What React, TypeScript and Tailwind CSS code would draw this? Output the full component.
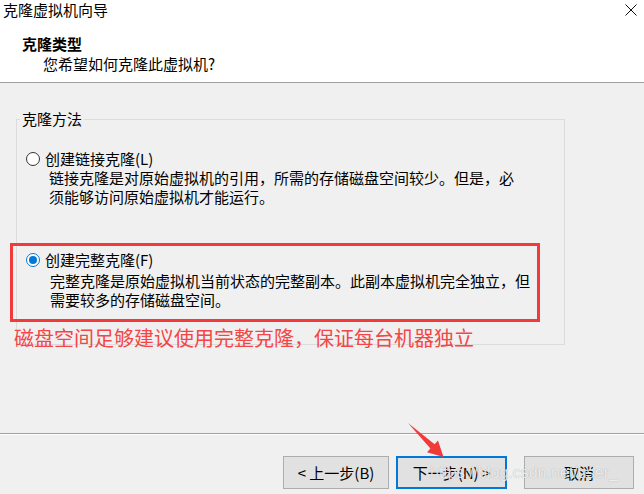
export default function App() {
  return (
    <div className="relative w-[644px] h-[494px] overflow-hidden bg-[#f0f0f0] font-['Noto_Sans_CJK_SC','Microsoft_YaHei',sans-serif] text-[15px] text-black">
      {/* header */}
      <div className="h-[83px] bg-white border-b border-[#a0a0a0]">
        <div className="flex h-[20px] items-center justify-between pl-[3px] pr-[7px]">
          <span className="leading-[20px]">克隆虚拟机向导</span>
          <svg width="12" height="12" viewBox="0 0 12 12">
            <path d="M0.5 0.5L11.5 11.5M11.5 0.5L0.5 11.5" stroke="#111" strokeWidth="1" fill="none" />
          </svg>
        </div>
        <div className="mt-[14px] pl-[22px] font-bold leading-[20px]">克隆类型</div>
        <div className="pl-[43px] leading-[20px]">您希望如何克隆此虚拟机?</div>
      </div>

      {/* group box */}
      <fieldset className="mt-[26px] ml-[16px] w-[549px] h-[236px] border border-[#dcdcdc]">
        <legend className="ml-[3px] px-[2px] leading-[20px]">克隆方法</legend>

        <div className="mt-[20px] flex h-[19px] items-center">
          <span className="ml-[9px] h-[14px] w-[14px] rounded-full border border-[#333] bg-white" />
          <span className="ml-[5px] leading-[19px]">创建链接克隆(L)</span>
        </div>
        <div className="ml-[32px] whitespace-nowrap leading-[19px]">
          链接克隆是对原始虚拟机的引用，所需的存储磁盘空间较少。但是，必
          <br />
          须能够访问原始虚拟机才能运行。
        </div>

        <div className="mt-[44px] flex h-[19px] items-center">
          <span className="ml-[9px] flex h-[14px] w-[14px] items-center justify-center rounded-full border border-[#0078d7] bg-white">
            <span className="h-[8px] w-[8px] rounded-full bg-[#0078d7]" />
          </span>
          <span className="ml-[5px] leading-[19px]">创建完整克隆(F)</span>
        </div>
        <div className="mt-[2px] ml-[33px] whitespace-nowrap leading-[19px]">
          完整克隆是原始虚拟机当前状态的完整副本。此副本虚拟机完全独立，但
          <br />
          需要较多的存储磁盘空间。
        </div>
      </fieldset>

      {/* separator */}
      <div className="mt-[88px] h-px bg-[#a0a0a0]" />
      <div className="h-px bg-white" />

      {/* buttons */}
      <div className="mt-[21px] flex justify-end pr-[10px]">
        <button className="h-[33px] w-[106px] border border-[#adadad] bg-[#e1e1e1] leading-[20px]">&lt; 上一步(B)</button>
        <button className="ml-[7px] h-[33px] w-[111px] border-2 border-[#0078d7] bg-[#e1e1e1] leading-[20px]">下一步(N) &gt;</button>
        <button className="ml-[17px] h-[33px] w-[110px] border border-[#adadad] bg-[#e1e1e1] leading-[20px]">取消</button>
      </div>

      {/* annotations */}
      <div className="absolute left-[10px] top-[243px] h-[79px] w-[530px] border-[3px] border-[#f33a3a]" />
      <div className="absolute left-[14px] top-[326px] whitespace-nowrap text-[20px] leading-[24px] text-[#f54545]">
        磁盘空间足够建议使用完整克隆，保证每台机器独立
      </div>
      <svg className="pointer-events-none absolute left-0 top-0" width="644" height="494">
        <polygon
          points="408,423 434.6,444.2 438,440.6 443.5,457 427,452.2 430.4,448.6"
          fill="#f33a3a"
        />
      </svg>
      <div className="pointer-events-none absolute left-[430px] top-[463px] whitespace-nowrap font-['Liberation_Sans',sans-serif] text-[16px] leading-[20px] text-white/80 [text-shadow:0_0_1px_rgba(0,0,0,0.35)]">
        https://blog.csdn.net/user_
      </div>
    </div>
  );
}
